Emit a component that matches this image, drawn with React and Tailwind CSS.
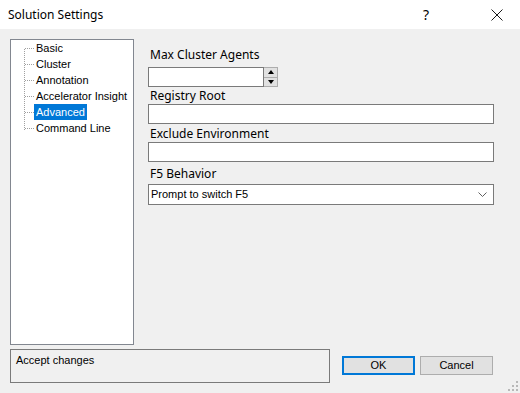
const treeItems = ['Basic', 'Cluster', 'Annotation', 'Accelerator Insight', 'Advanced', 'Command Line'];

const arial = { fontFamily: '"Liberation Sans", Arial, sans-serif' };

function Field({ label, children }) {
  return (
    <div className="flex flex-col">
      <div className="h-[17px] leading-[17px] text-[12px] text-black pl-[2px]">{label}</div>
      {children}
    </div>
  );
}

export default function App() {
  return (
    <div
      className="relative w-[520px] h-[393px] bg-[#f0f0f0] flex flex-col overflow-hidden text-black"
      style={{ fontFamily: '"Segoe UI", "Noto Sans", "Liberation Sans", sans-serif' }}
    >
      {/* Title bar */}
      <div className="h-[29px] bg-white flex items-center shrink-0">
        <span className="ml-[8px] text-[12px]">Solution Settings</span>
        <span className="ml-auto text-[14px] w-[10px] mr-[58px]">?</span>
        <svg className="mr-[17px]" width="12" height="12" viewBox="0 0 12 12">
          <path d="M0.5 0.5 L11.5 11.5 M11.5 0.5 L0.5 11.5" stroke="#1a1a1a" strokeWidth="1" fill="none" />
        </svg>
      </div>

      <div className="flex pt-[10px]">
        {/* Tree */}
        <div className="relative ml-[10px] w-[124px] h-[306px] border border-[#828790] bg-white" style={arial}>
          <div className="absolute left-[13px] top-[9px] h-[81px] border-l border-dotted border-[#a0a0a0]" />
          <div className="flex flex-col">
            {treeItems.map((item) => (
              <div key={item} className="flex items-center h-[16px]">
                <span className="shrink-0 ml-[14px] w-[9px] border-t border-dotted border-[#a0a0a0]" />
                <span
                  className={
                    'px-[2px] h-[16px] leading-[16px] text-[11px] whitespace-nowrap ' +
                    (item === 'Advanced' ? 'bg-[#0078d7] text-white' : '')
                  }
                >
                  {item}
                </span>
              </div>
            ))}
          </div>
        </div>

        {/* Settings */}
        <div className="ml-[14px] w-[346px] flex flex-col pt-[7px]">
          <Field label="Max Cluster Agents">
            <div className="flex mt-[4px]">
              <div className="w-[116px] h-[20px] border border-[#7a7a7a] bg-white" />
              <div className="w-[14px] h-[20px] flex flex-col border border-[#adadad] border-l-0 bg-[#e1e1e1]">
                <div className="flex-1 flex items-center justify-center border-b border-[#adadad]">
                  <span className="w-0 h-0 border-x-[3px] border-x-transparent border-b-[4px] border-b-black" />
                </div>
                <div className="flex-1 flex items-center justify-center">
                  <span className="w-0 h-0 border-x-[3px] border-x-transparent border-t-[4px] border-t-black" />
                </div>
              </div>
            </div>
          </Field>
          <div>
            <Field label="Registry Root">
              <div className="h-[20px] border border-[#7a7a7a] bg-white" />
            </Field>
          </div>
          <div className="mt-[1px]">
            <Field label="Exclude Environment">
              <div className="h-[20px] border border-[#7a7a7a] bg-white" />
            </Field>
          </div>
          <div className="mt-[3px]">
            <Field label="F5 Behavior">
              <div
                className="mt-[2px] h-[21px] border border-[#7a7a7a] bg-white flex items-center text-[11px] pl-[2px]"
                style={arial}
              >
                <span>Prompt to switch F5</span>
                <svg className="ml-auto mr-[6px]" width="9" height="5" viewBox="0 0 9 5">
                  <path d="M0.5 0.5 L4.5 4.5 L8.5 0.5" fill="none" stroke="#606060" strokeWidth="1" />
                </svg>
              </div>
            </Field>
          </div>
        </div>
      </div>

      {/* Bottom */}
      <div className="flex mt-[4px]" style={arial}>
        <div className="ml-[10px] w-[320px] h-[34px] border border-[#7a7a7a] px-[5px] pt-[2px] text-[11px]">
          Accept changes
        </div>
        <div className="flex gap-[5px] ml-[12px] mt-[7px]">
          <button className="w-[73px] h-[19px] border-2 border-[#0078d7] bg-[#e1e1e1] text-[11px] leading-[15px]">OK</button>
          <button className="w-[73px] h-[19px] border border-[#adadad] bg-[#e1e1e1] text-[11px] leading-[17px]">Cancel</button>
        </div>
      </div>

      {/* Resize grip */}
      <svg className="absolute right-[2px] bottom-[2px]" width="10" height="10" viewBox="0 0 10 10">
        <rect x="8" y="0" width="2" height="2" fill="#b8b8b8" />
        <rect x="4" y="4" width="2" height="2" fill="#b8b8b8" />
        <rect x="8" y="4" width="2" height="2" fill="#b8b8b8" />
        <rect x="0" y="8" width="2" height="2" fill="#b8b8b8" />
        <rect x="4" y="8" width="2" height="2" fill="#b8b8b8" />
        <rect x="8" y="8" width="2" height="2" fill="#b8b8b8" />
      </svg>
    </div>
  );
}
